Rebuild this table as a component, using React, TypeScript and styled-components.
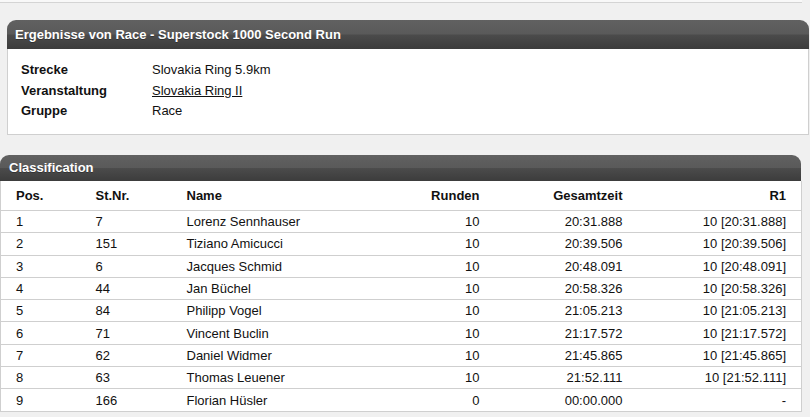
import React from 'react'
import styled, { createGlobalStyle } from 'styled-components'

const GlobalStyle = createGlobalStyle`
  body {
    margin: 0;
    background: #f0f0f0;
    font-family: "Liberation Sans", Arial, sans-serif;
    font-size: 13px;
    color: #111;
  }
`

const Page = styled.div`
  width: 810px;
  height: 417px;
  overflow: hidden;
`

const TopLine = styled.div`
  width: 802px;
  height: 2px;
  background: #f8f8f8;
  border-bottom: 1px solid #d4d4d4;
`

const Panel = styled.section<{ $left: number; $width: number; $top: number }>`
  margin-left: ${(p) => p.$left}px;
  margin-top: ${(p) => p.$top}px;
  width: ${(p) => p.$width}px;
`

const PanelHeader = styled.div<{ $height: number; $pad: number }>`
  height: ${(p) => p.$height}px;
  line-height: ${(p) => p.$height}px;
  padding-left: ${(p) => p.$pad}px;
  border-radius: 9px 9px 0 0;
  background: linear-gradient(#616161 0%, #5a5a5a 48%, #4b4b4b 52%, #3c3c3c 100%);
  color: #fff;
  font-weight: bold;
  font-size: 13px;
  text-shadow: 0 1px 0 rgba(0, 0, 0, 0.3);
`

const InfoBody = styled.div`
  background: #fff;
  border: 1px solid #cfcfcf;
  border-top: none;
  padding: 11px 13px 12px;
`

const InfoRow = styled.div`
  display: grid;
  grid-template-columns: 131px 1fr;
  height: 20.5px;
  line-height: 20.5px;
`

const InfoLabel = styled.span`
  font-weight: bold;
`

const InfoLink = styled.a`
  color: #111;
  text-decoration: underline;
`

const Table = styled.table`
  width: 801px;
  border-collapse: collapse;
  background: #fff;
  table-layout: fixed;
  border-left: 1px solid #cfcfcf;
  border-right: 1px solid #cfcfcf;
`

const HeadCell = styled.th<{ $align?: 'left' | 'right'; $width: number }>`
  box-sizing: border-box;
  width: ${(p) => p.$width}px;
  height: 30px;
  padding: 0 15px;
  text-align: ${(p) => p.$align ?? 'left'};
  font-weight: bold;
  border-bottom: 1px solid #cfcfcf;
`

const Cell = styled.td<{ $align?: 'left' | 'right' }>`
  height: 21.3px;
  padding: 0 15px;
  text-align: ${(p) => p.$align ?? 'left'};
  border-bottom: 1px solid #cfcfcf;
  white-space: nowrap;
`

const rows = [
  ['1', '7', 'Lorenz Sennhauser', '10', '20:31.888', '10 [20:31.888]'],
  ['2', '151', 'Tiziano Amicucci', '10', '20:39.506', '10 [20:39.506]'],
  ['3', '6', 'Jacques Schmid', '10', '20:48.091', '10 [20:48.091]'],
  ['4', '44', 'Jan Büchel', '10', '20:58.326', '10 [20:58.326]'],
  ['5', '84', 'Philipp Vogel', '10', '21:05.213', '10 [21:05.213]'],
  ['6', '71', 'Vincent Buclin', '10', '21:17.572', '10 [21:17.572]'],
  ['7', '62', 'Daniel Widmer', '10', '21:45.865', '10 [21:45.865]'],
  ['8', '63', 'Thomas Leuener', '10', '21:52.111', '10 [21:52.111]'],
  ['9', '166', 'Florian Hüsler', '0', '00:00.000', '-'],
]

export default function App() {
  return (
    <Page>
      <GlobalStyle />
      <TopLine />
      <Panel $left={7} $width={802} $top={17}>
        <PanelHeader $height={29} $pad={8}>
          Ergebnisse von Race - Superstock 1000 Second Run
        </PanelHeader>
        <InfoBody>
          <InfoRow>
            <InfoLabel>Strecke</InfoLabel>
            <span>Slovakia Ring 5.9km</span>
          </InfoRow>
          <InfoRow>
            <InfoLabel>Veranstaltung</InfoLabel>
            <span>
              <InfoLink href="#">Slovakia Ring II</InfoLink>
            </span>
          </InfoRow>
          <InfoRow>
            <InfoLabel>Gruppe</InfoLabel>
            <span>Race</span>
          </InfoRow>
        </InfoBody>
      </Panel>
      <Panel $left={0} $width={801} $top={20}>
        <PanelHeader $height={26} $pad={9}>
          Classification
        </PanelHeader>
        <Table>
          <thead>
            <tr>
              <HeadCell $width={80}>Pos.</HeadCell>
              <HeadCell $width={91}>St.Nr.</HeadCell>
              <HeadCell $width={209}>Name</HeadCell>
              <HeadCell $width={114} $align="right">Runden</HeadCell>
              <HeadCell $width={143} $align="right">Gesamtzeit</HeadCell>
              <HeadCell $width={164} $align="right">R1</HeadCell>
            </tr>
          </thead>
          <tbody>
            {rows.map((r) => (
              <tr key={r[0]}>
                <Cell>{r[0]}</Cell>
                <Cell>{r[1]}</Cell>
                <Cell>{r[2]}</Cell>
                <Cell $align="right">{r[3]}</Cell>
                <Cell $align="right">{r[4]}</Cell>
                <Cell $align="right">{r[5]}</Cell>
              </tr>
            ))}
          </tbody>
        </Table>
      </Panel>
    </Page>
  )
}
